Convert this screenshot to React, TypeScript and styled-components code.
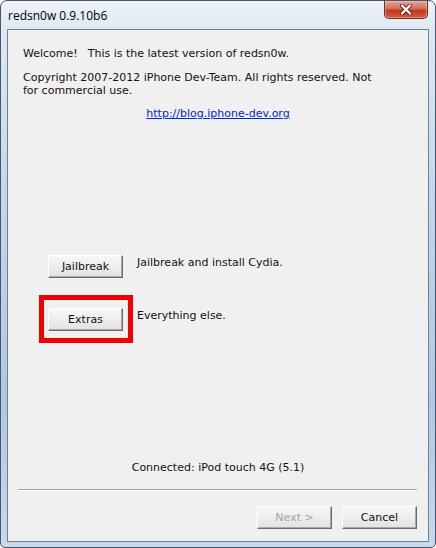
import React from "react";
import styled, { createGlobalStyle } from "styled-components";

const GlobalStyle = createGlobalStyle`
  html, body {
    margin: 0;
    padding: 0;
    background: #ffffff;
  }
  body {
    font-family: "DejaVu Sans", "Liberation Sans", sans-serif;
  }
`;

const Window = styled.div`
  box-sizing: border-box;
  width: 436px;
  height: 548px;
  display: flex;
  flex-direction: column;
  border: 1px solid #46566b;
  border-radius: 7px 7px 5px 5px;
  background: linear-gradient(
    180deg,
    #eef3f9 0px,
    #dfe8f3 28px,
    #c3d6ea 200px,
    #b0c8e3 400px,
    #c8d9ec 100%
  );
  overflow: hidden;
`;

const TitleBar = styled.div`
  height: 28px;
  display: flex;
  justify-content: space-between;
  align-items: flex-start;
  padding: 0 7px 0 7px;
  box-sizing: border-box;
`;

const Title = styled.span`
  font-family: "Open Sans", "Noto Sans", sans-serif;
  font-size: 12px;
  color: #000;
  margin-top: 6px;
`;

const CloseButton = styled.div`
  width: 44px;
  height: 18px;
  box-sizing: border-box;
  border: 1px solid #6b2b22;
  border-top: none;
  border-radius: 0 0 5px 5px;
  background: linear-gradient(180deg, #e9a597 0%, #d66c58 45%, #c2391f 55%, #d35a3f 100%);
  display: flex;
  align-items: center;
  justify-content: center;
  box-shadow: inset 0 0 0 1px rgba(255, 210, 200, 0.45);
`;

const Client = styled.div`
  flex: 1;
  margin: 0 6px 5px 6px;
  border: 1px solid #6f8096;
  background: #f0f0f0;
  display: flex;
  flex-direction: column;
  font-size: 11px;
  line-height: 13px;
  color: #111;
`;

const Para = styled.p<{ $top: number }>`
  margin: ${(p) => p.$top}px 15px 0 15px;
`;

const Gap = styled.span`
  display: inline-block;
  width: 10px;
`;

const LinkLine = styled.div`
  margin-top: 10px;
  text-align: center;
`;

const Link = styled.a`
  color: #0026d9;
  text-decoration: underline;
`;

const Actions = styled.div`
  margin-top: 135px;
  padding-left: 40px;
  display: flex;
  flex-direction: column;
  gap: 30px;
`;

const ActionRow = styled.div`
  display: flex;
  align-items: flex-start;
  gap: 14px;
`;

const ActionText = styled.span`
  margin-top: 1px;
`;

const ButtonWrap = styled.div`
  position: relative;
  display: flex;
`;

const Highlight = styled.div`
  position: absolute;
  top: -13px;
  left: -9px;
  right: -10px;
  bottom: -12px;
  border: 5px solid #f20000;
  pointer-events: none;
`;

const Button = styled.button<{ $disabled?: boolean }>`
  width: 75px;
  height: 23px;
  box-sizing: border-box;
  padding: 0;
  font-family: inherit;
  font-size: 11px;
  color: ${(p) => (p.$disabled ? "#a3a3a3" : "#111")};
  background: linear-gradient(180deg, #f7f7f7 0%, #ececec 55%, #e2e2e2 100%);
  border: 1px solid;
  border-color: #ffffff #6a6a6a #6a6a6a #ffffff;
  box-shadow: inset -1px -1px 0 #a9a9a9;
  border-radius: 0;
  cursor: default;
`;

const Footer = styled.div`
  margin-top: auto;
  display: flex;
  flex-direction: column;
`;

const Status = styled.div`
  text-align: center;
  margin-bottom: 15px;
`;

const Separator = styled.div`
  margin: 0 11px 0 10px;
  height: 1px;
  background: #a0a0a0;
  border-bottom: 1px solid #ffffff;
`;

const ButtonBar = styled.div`
  display: flex;
  justify-content: flex-end;
  gap: 10px;
  padding: 15px 11px 12px 0;
`;

const CloseGlyph = () => (
  <svg width="14" height="11" viewBox="0 0 14 11">
    <path d="M3 1.5 L11 9.5 M11 1.5 L3 9.5" stroke="#5a1a12" strokeWidth="4" strokeLinecap="round" />
    <path d="M3 1.5 L11 9.5 M11 1.5 L3 9.5" stroke="#ffffff" strokeWidth="2.4" strokeLinecap="round" />
  </svg>
);

const App = () => {
  return (
    <>
      <GlobalStyle />
      <Window>
        <TitleBar>
          <Title>redsn0w 0.9.10b6</Title>
          <CloseButton>
            <CloseGlyph />
          </CloseButton>
        </TitleBar>
        <Client>
          <Para $top={17}>
            Welcome!<Gap />This is the latest version of redsn0w.
          </Para>
          <Para $top={11}>
            Copyright 2007-2012 iPhone Dev-Team. All rights reserved. Not
            <br />
            for commercial use.
          </Para>
          <LinkLine>
            <Link href="#">http://blog.iphone-dev.org</Link>
          </LinkLine>
          <Actions>
            <ActionRow>
              <ButtonWrap>
                <Button>Jailbreak</Button>
              </ButtonWrap>
              <ActionText>Jailbreak and install Cydia.</ActionText>
            </ActionRow>
            <ActionRow>
              <ButtonWrap>
                <Button>Extras</Button>
                <Highlight />
              </ButtonWrap>
              <ActionText>Everything else.</ActionText>
            </ActionRow>
          </Actions>
          <Footer>
            <Status>Connected: iPod touch 4G (5.1)</Status>
            <Separator />
            <ButtonBar>
              <Button $disabled>Next &gt;</Button>
              <Button>Cancel</Button>
            </ButtonBar>
          </Footer>
        </Client>
      </Window>
    </>
  );
};

export default App;
